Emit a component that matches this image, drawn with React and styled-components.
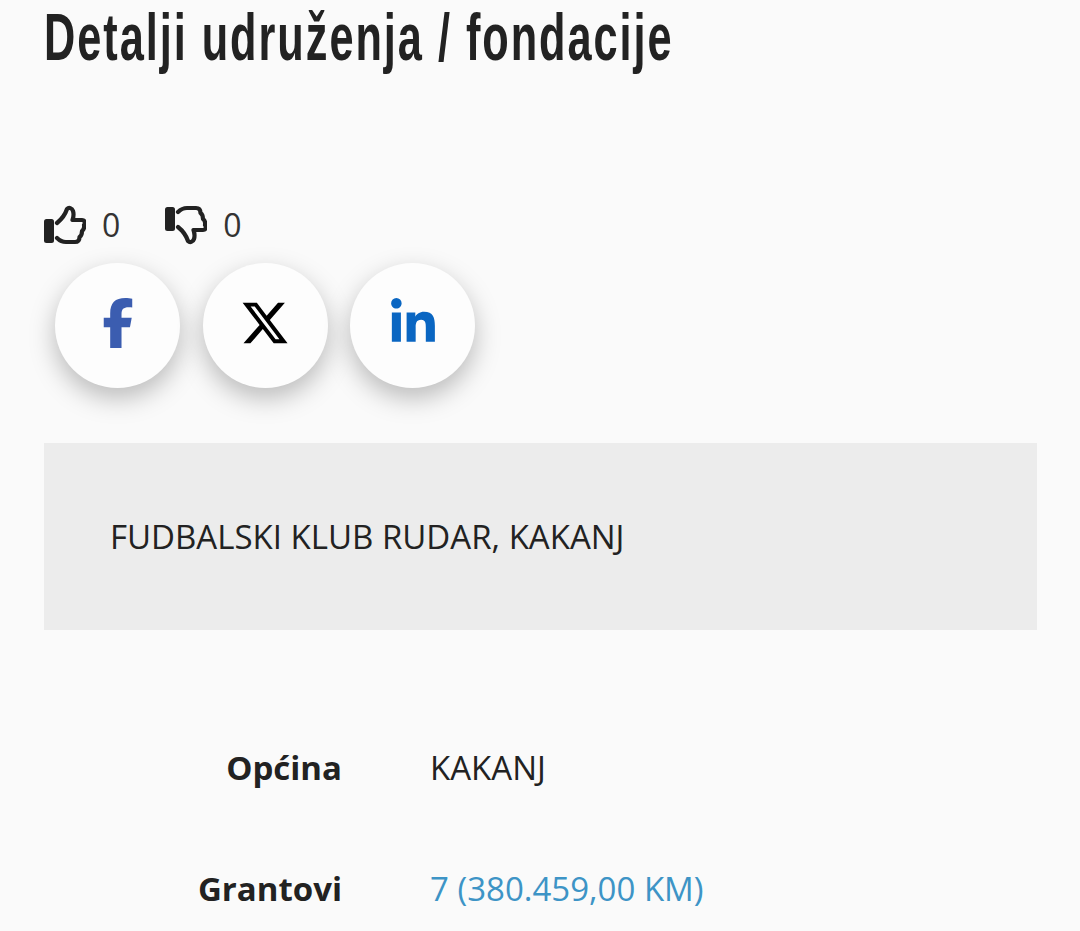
import React from "react";
import styled, { createGlobalStyle } from "styled-components";
import { FaFacebookF, FaLinkedinIn, FaXTwitter } from "react-icons/fa6";

const GlobalStyle = createGlobalStyle`
  html, body {
    margin: 0;
    background: #fafafa;
    color: #222;
    font-family: "Open Sans", "Liberation Sans", sans-serif;
    overflow: hidden;
  }
`;

const Page = styled.div`
  height: 931px;
  overflow: hidden;
  padding: 0 43px 0 44px;
`;

const Title = styled.h1`
  margin: 0;
  font-family: "Liberation Sans", sans-serif;
  font-weight: 700;
  font-size: 66px;
  line-height: 74px;
  letter-spacing: 3px;
  white-space: nowrap;
  transform: scaleX(0.656);
  transform-origin: left top;
  color: #222;
`;

const Votes = styled.div`
  display: flex;
  align-items: center;
  gap: 45px;
  margin-top: 130px;
  height: 42px;
`;

const Vote = styled.div`
  display: flex;
  align-items: center;
  gap: 16px;
  font-size: 32px;
  line-height: 42px;
  color: #333;
`;

const ThumbSvg = styled.svg`
  display: block;
  width: 42px;
  height: 40px;
  transform: ${(p) => (p.$down ? "scaleY(-1)" : "none")};
`;

const Shares = styled.div`
  display: flex;
  gap: 22.5px;
  margin-top: 17px;
  padding-left: 11px;
`;

const ShareButton = styled.a`
  width: 125px;
  height: 125px;
  box-sizing: border-box;
  padding-bottom: 6px;
  border-radius: 50%;
  background: #fdfdfd;
  display: flex;
  align-items: center;
  justify-content: center;
  color: ${(p) => p.$color};
  font-size: ${(p) => p.$size}px;
  box-shadow: 0 10px 26px rgba(0, 0, 0, 0.26);
`;

const NamePanel = styled.div`
  margin-top: 55px;
  height: 187px;
  background: #ececec;
  display: flex;
  align-items: center;
  padding-left: 66px;
  font-size: 33px;
  color: #222;
`;

const Details = styled.dl`
  margin: 116px 0 0;
  display: grid;
  grid-template-columns: 298px 1fr;
  column-gap: 88px;
  row-gap: 77px;
  font-size: 33px;
  line-height: 44px;
`;

const Label = styled.dt`
  font-weight: 700;
  text-align: right;
`;

const Value = styled.dd`
  margin: 0;
`;

const ValueLink = styled.a`
  color: #3d94c6;
  text-decoration: none;
`;

const Thumb = ({ down }) => (
  <ThumbSvg $down={down} viewBox="0 0 42 40">
    <rect x="0" y="14" width="10" height="24" rx="2.5" fill="#222" />
    <path
      d="M13 18 C18 14 21 10 23 4 C25 2 28 3 29 6 C30 9 29.5 12 28.5 15 L38 15 C41 15 41.5 18 40 20 C40.5 23 39.5 25 38 26 C38 29 37 31 35.5 32 C35.5 35 34 37 31 37 L22 37 C18 37 15 35 13 33"
      fill="none"
      stroke="#222"
      strokeWidth="4.2"
      strokeLinecap="round"
      strokeLinejoin="round"
    />
  </ThumbSvg>
);

export default function App() {
  return (
    <Page>
      <GlobalStyle />
      <Title>Detalji udruženja / fondacije</Title>
      <Votes>
        <Vote>
          <Thumb />0
        </Vote>
        <Vote>
          <Thumb down />0
        </Vote>
      </Votes>
      <Shares>
        <ShareButton $color="#3b5db0" $size={50}>
          <FaFacebookF />
        </ShareButton>
        <ShareButton $color="#000" $size={50}>
          <FaXTwitter />
        </ShareButton>
        <ShareButton $color="#0a66c2" $size={50}>
          <FaLinkedinIn />
        </ShareButton>
      </Shares>
      <NamePanel>FUDBALSKI KLUB RUDAR, KAKANJ</NamePanel>
      <Details>
        <Label>Općina</Label>
        <Value>KAKANJ</Value>
        <Label>Grantovi</Label>
        <Value>
          <ValueLink href="#">7 (380.459,00 KM)</ValueLink>
        </Value>
      </Details>
    </Page>
  );
}
